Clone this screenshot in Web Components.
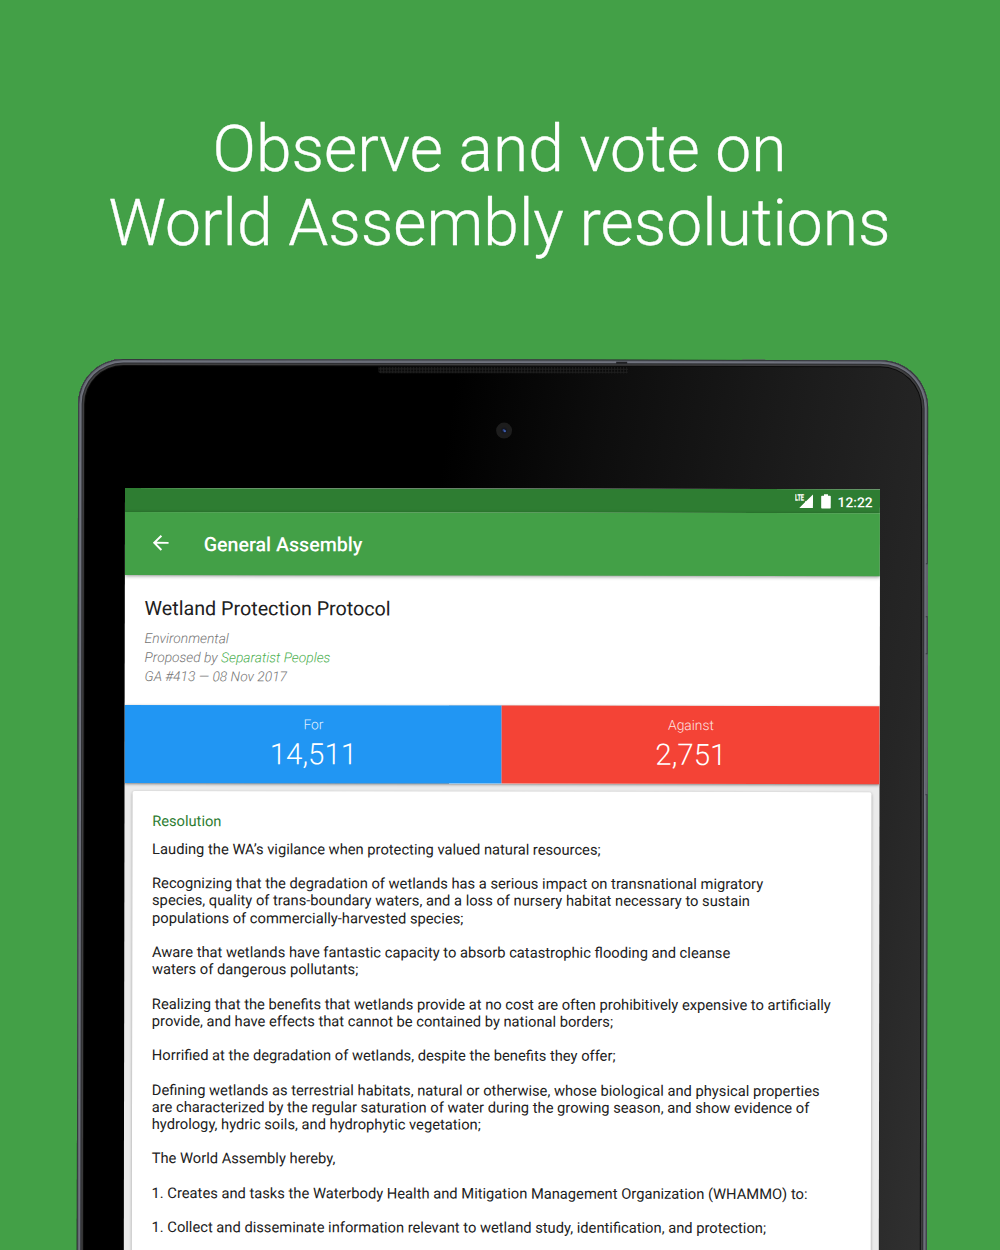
<!DOCTYPE html>
<html lang="en">
<head>
<meta charset="utf-8">
<title>World Assembly resolutions</title>
<style>
html,body{margin:0;height:1250px;overflow:hidden;background:#43a047}
body{font-family:Roboto,"Liberation Sans",sans-serif}
a{color:#4caf50;text-decoration:none}
</style>
</head>
<body>
<promo-page>
  <span slot="title">Observe and vote on<br>World Assembly resolutions</span>
  <tablet-frame>
    <status-bar time="12:22"></status-bar>
    <app-bar>General Assembly</app-bar>
    <resolution-header>
      <span slot="name">Wetland Protection Protocol</span>
      <span slot="category">Environmental</span>
      <span slot="proposer">Proposed by <a>Separatist Peoples</a></span>
      <span slot="date">GA #413 — 08 Nov 2017</span>
    </resolution-header>
    <vote-row>
      <vote-tile label="For" style="--tile:#2196f3">14,511</vote-tile>
      <vote-tile label="Against" style="--tile:#f44336">2,751</vote-tile>
    </vote-row>
    <text-card heading="Resolution">
      <text-para>Lauding the WA’s vigilance when protecting valued natural resources;</text-para>
      <text-para>Recognizing that the degradation of wetlands has a serious impact on transnational migratory<br>species, quality of trans-boundary waters, and a loss of nursery habitat necessary to sustain<br>populations of commercially-harvested species;</text-para>
      <text-para>Aware that wetlands have fantastic capacity to absorb catastrophic flooding and cleanse<br>waters of dangerous pollutants;</text-para>
      <text-para>Realizing that the benefits that wetlands provide at no cost are often prohibitively expensive to artificially<br>provide, and have effects that cannot be contained by national borders;</text-para>
      <text-para>Horrified at the degradation of wetlands, despite the benefits they offer;</text-para>
      <text-para>Defining wetlands as terrestrial habitats, natural or otherwise, whose biological and physical properties<br>are characterized by the regular saturation of water during the growing season, and show evidence of<br>hydrology, hydric soils, and hydrophytic vegetation;</text-para>
      <text-para>The World Assembly hereby,</text-para>
      <text-para>1. Creates and tasks the Waterbody Health and Mitigation Management Organization (WHAMMO) to:</text-para>
      <text-para>1. Collect and disseminate information relevant to wetland study, identification, and protection;</text-para>
    </text-card>
  </tablet-frame>
</promo-page>
<script>
function define(name, html, setup){
  const t = document.createElement('template');
  t.innerHTML = html;
  customElements.define(name, class extends HTMLElement{
    constructor(){
      super();
      this.attachShadow({mode:'open'}).append(t.content.cloneNode(true));
    }
    connectedCallback(){ if(setup) setup(this, this.shadowRoot); }
  });
}

define('promo-page', `
<style>
:host{display:flex;flex-direction:column;align-items:center;box-sizing:border-box;width:1000px;height:1250px;padding-top:112px;overflow:hidden;background:#43a047}
h1{margin:0 1px 99px 0;font-weight:300;font-size:64.15px;line-height:74px;height:148px;color:#fff;-webkit-text-stroke:.35px #fff;text-align:center;white-space:nowrap}
</style>
<h1><slot name="title"></slot></h1>
<slot></slot>`);

define('tablet-frame', `
<style>
:host{display:block;box-sizing:border-box;position:relative;width:849.5px;height:960px;margin-left:5.1px;flex:none;padding:0 48px 0 46.5px;
 border-radius:45px 48px 0 0;transform:rotate(.09deg);transform-origin:46.5px 129px;
 background:linear-gradient(99deg,#000 38%,#0d0d0d 53%,#1b1b1b 72%,#262626 88%,#323232 100%);
 box-shadow:inset 0 0 0 1px #34383c,inset 0 0 0 2px #62656f,inset 0 0 0 3.5px #70737e,inset 0 0 0 4.5px #2b2c30,inset 0 0 0 6px #3e3e3f,inset 0 0 0 7px #0c0c0c}
.top{display:flex;flex-direction:column;align-items:center;height:129.3px;margin-right:-1.5px}
.speaker{width:250px;height:7px;margin-top:6.5px;border-radius:0 0 3px 3px;background:radial-gradient(circle at 1px 1px,#030303 .6px,transparent 1px) 0 0/3px 3px,#1f1f1f}
.camera{display:block;margin:48px 0 0 1.6px}
.screen{width:755px;height:831px;background:#ebebeb;overflow:hidden}
.edge{position:absolute}
.jack{left:538px;top:1.5px;width:11px;height:2.5px;background:#202124}
.strip{left:664px;top:-1px;width:23px;height:1px;background:#4d7452}
.key{right:-.4px;width:2.4px;background:#62656d;border:solid #363a3e;border-width:1px 0}
</style>
<div class="top"><div class="speaker"></div>
<svg class="camera" width="18" height="18" viewBox="0 0 18 18"><circle cx="9" cy="9" r="8" fill="#1d1d1d"/><circle cx="9" cy="9" r="3" fill="#151720"/><circle cx="8.7" cy="8.6" r="1.2" fill="#2d417c"/><circle cx="9.8" cy="9.6" r="1.1" fill="#3f5fae"/></svg></div>
<div class="screen"><slot></slot></div>
<i class="edge jack"></i><i class="edge strip"></i>
<i class="edge key" style="top:203px;height:52px"></i><i class="edge key" style="top:293px;height:140px"></i>`);

define('status-bar', `
<style>
:host{display:flex;justify-content:flex-end;align-items:center;box-sizing:border-box;height:23.6px;padding:0 6.9px 0 0;background:#2e7d32;color:#fff}
svg{display:block}
.signal{margin-right:8px}.battery{margin-right:7px}
time{font-weight:500;font-size:13.8px;line-height:16px;padding-top:1px}
.lte{font:700 8.8px Roboto,sans-serif;fill:#fff;stroke:#fff;stroke-width:.25px}
</style>
<svg class="signal" width="18" height="16" viewBox="0 0 18 16"><path d="M18 1.3V15H4.3L10 9.3V8.2H11.1Z" fill="#fff"/><text class="lte" x="0" y="7.4" textLength="9" lengthAdjust="spacingAndGlyphs">LTE</text></svg>
<svg class="battery" width="10" height="15" viewBox="0 0 10 15"><path d="M1 1.7H3V.2H7V1.7H9Q9.8 1.7 9.8 2.5V13.7Q9.8 14.5 9 14.5H1Q.2 14.5 .2 13.7V2.5Q.2 1.7 1 1.7Z" fill="#fff"/></svg>
<time></time>`, (h, r) => r.querySelector('time').textContent = h.getAttribute('time'));

define('app-bar', `
<style>
:host{display:flex;align-items:center;position:relative;z-index:1;box-sizing:border-box;height:62.9px;padding:0 24px;background:#43a047;color:#fff;box-shadow:0 1px 4px rgba(0,0,0,.42)}
svg{display:block;flex:none;margin:-1px 31.7px 0 0}
h2{margin:2.4px 0 0;font-weight:500;font-size:19.62px;line-height:24px}
</style>
<svg width="23.6" height="23.6" viewBox="0 0 24 24"><path fill="#fff" d="M20 11H7.83l5.59-5.59L12 4l-8 8 8 8 1.41-1.41L7.83 13H20v-2z"/></svg>
<h2><slot></slot></h2>`);

define('resolution-header', `
<style>
:host{display:block;box-sizing:border-box;height:129.9px;padding:22.4px 20.3px 0;background:#fff}
h3{margin:0 0 8px;font-weight:400;font-size:19.72px;line-height:24px;color:#212121}
.meta{font-style:italic;font-weight:300;font-size:13.8px;line-height:18.8px;color:#757575}
</style>
<h3><slot name="name"></slot></h3>
<div class="meta"><slot name="category"></slot></div>
<div class="meta"><slot name="proposer"></slot></div>
<div class="meta"><slot name="date"></slot></div>`);

define('vote-row', `
<style>:host{display:flex;position:relative;height:78px;box-shadow:0 1px 3px rgba(0,0,0,.45)}</style><slot></slot>`);

define('vote-tile', `
<style>
:host{display:flex;flex:1;flex-direction:column;align-items:center;box-sizing:border-box;padding:10.3px 0 0 1.2px;background:var(--tile);color:#fff}
.label{font-weight:300;font-size:13.8px;line-height:18px;color:rgba(255,255,255,.88)}
.count{font-weight:300;font-size:29.5px;line-height:36px;margin-top:3px}
</style>
<div class="label"></div><div class="count"><slot></slot></div>`,
(h, r) => r.querySelector('.label').textContent = h.getAttribute('label'));

define('text-card', `
<style>
:host{display:block;box-sizing:border-box;height:520px;margin:8.2px 7.6px 0 8px;padding:21.3px 19.7px 0 20.2px;background:#fff;border-radius:2px;box-shadow:0 1px 3px rgba(0,0,0,.36)}
h4{margin:0 0 10.7px;font-weight:400;font-size:14.7px;line-height:18px;color:#2e7d32}
.body{display:flex;flex-direction:column;gap:17.2px}
</style>
<h4></h4><div class="body"><slot></slot></div>`,
(h, r) => r.querySelector('h4').textContent = h.getAttribute('heading'));

define('text-para', `
<style>:host{display:block;font-size:14.71px;line-height:17.2px;color:#212121;white-space:nowrap}</style><slot></slot>`);
</script>
</body>
</html>
